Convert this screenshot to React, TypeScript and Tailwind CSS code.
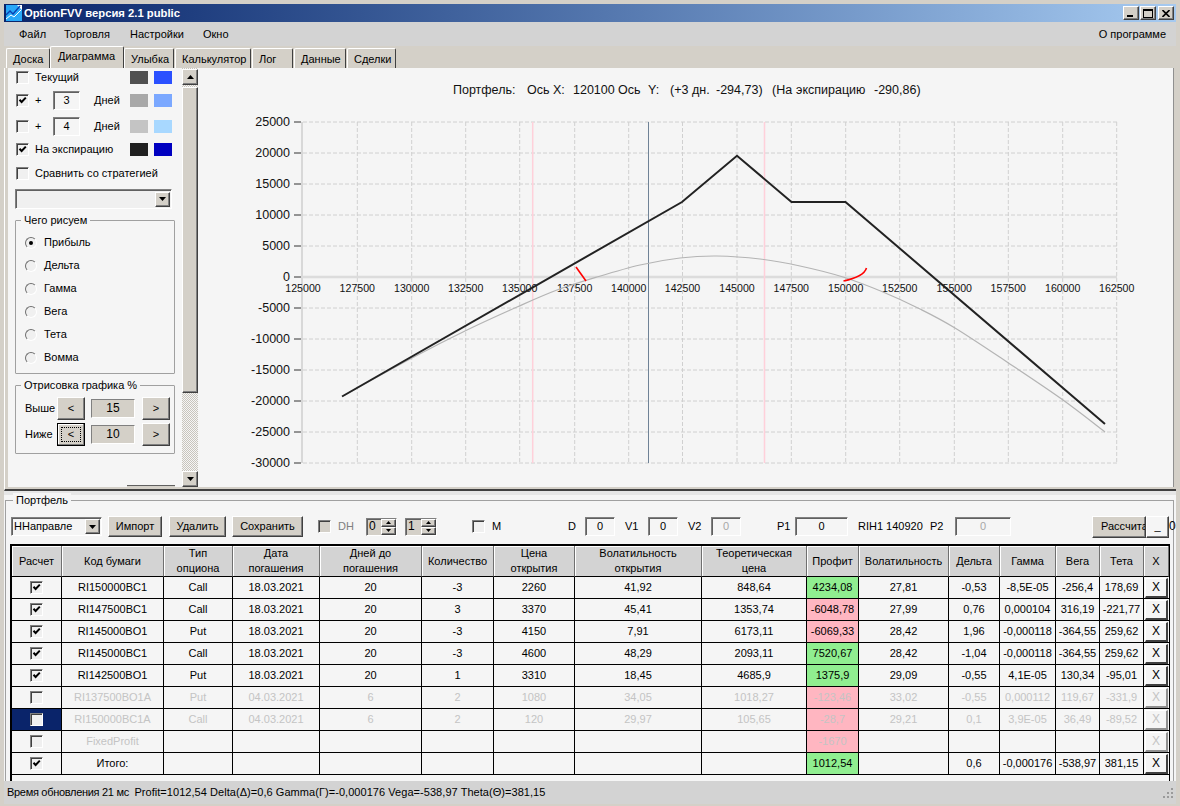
import type { ReactNode } from 'react';

const raised = 'border border-t-white border-l-white border-r-[#404040] border-b-[#404040] shadow-[inset_-1px_-1px_0_#808080]';
const sunken = 'border border-t-[#808080] border-l-[#808080] border-r-white border-b-white';

type Row = {
    on: boolean;
    off?: boolean;
    selected?: boolean;
    code: string;
    cells: string[];
    profit: string;
    good?: boolean;
    rest: string[];
};

const rows: Row[] = [
    { on: true, code: 'RI150000BC1', cells: ['Call', '18.03.2021', '20', '-3', '2260', '41,92', '848,64'], profit: '4234,08', good: true, rest: ['27,81', '-0,53', '-8,5E-05', '-256,4', '178,69'] },
    { on: true, code: 'RI147500BC1', cells: ['Call', '18.03.2021', '20', '3', '3370', '45,41', '1353,74'], profit: '-6048,78', rest: ['27,99', '0,76', '0,000104', '316,19', '-221,77'] },
    { on: true, code: 'RI145000BO1', cells: ['Put', '18.03.2021', '20', '-3', '4150', '7,91', '6173,11'], profit: '-6069,33', rest: ['28,42', '1,96', '-0,000118', '-364,55', '259,62'] },
    { on: true, code: 'RI145000BC1', cells: ['Call', '18.03.2021', '20', '-3', '4600', '48,29', '2093,11'], profit: '7520,67', good: true, rest: ['28,42', '-1,04', '-0,000118', '-364,55', '259,62'] },
    { on: true, code: 'RI142500BO1', cells: ['Put', '18.03.2021', '20', '1', '3310', '18,45', '4685,9'], profit: '1375,9', good: true, rest: ['29,09', '-0,55', '4,1E-05', '130,34', '-95,01'] },
    { on: false, off: true, code: 'RI137500BO1A', cells: ['Put', '04.03.2021', '6', '2', '1080', '34,05', '1018,27'], profit: '-123,46', rest: ['33,02', '-0,55', '0,000112', '119,67', '-331,9'] },
    { on: false, off: true, selected: true, code: 'RI150000BC1A', cells: ['Call', '04.03.2021', '6', '2', '120', '29,97', '105,65'], profit: '-28,7', rest: ['29,21', '0,1', '3,9E-05', '36,49', '-89,52'] },
    { on: false, off: true, code: 'FixedProfit', cells: ['', '', '', '', '', '', ''], profit: '-1670', rest: ['', '', '', '', ''] },
    { on: true, code: 'Итого:', cells: ['', '', '', '', '', '', ''], profit: '1012,54', good: true, rest: ['', '0,6', '-0,000176', '-538,97', '381,15'] },
];

const columns = [50, 102, 69, 87, 102, 72, 81, 127, 105, 52, 90, 51, 56, 44, 44, 25];

const headers = [
    ['Расчет'], ['Код бумаги'], ['Тип', 'опциона'], ['Дата', 'погашения'], ['Дней до', 'погашения'], ['Количество'],
    ['Цена', 'открытия'], ['Волатильность', 'открытия'], ['Теоретическая', 'цена'], ['Профит'], ['Волатильность'],
    ['Дельта'], ['Гамма'], ['Вега'], ['Тета'], ['X'],
];

const xTicks = [303, 357.3, 411.7, 465.7, 519.7, 574.7, 628.7, 682.5, 737, 791.3, 845.7, 899.7, 954.3, 1008.3, 1062.7, 1116.7];
const xLabels = ['125000', '127500', '130000', '132500', '135000', '137500', '140000', '142500', '145000', '147500', '150000', '152500', '155000', '157500', '160000', '162500'];
const yValues = ['25000', '20000', '15000', '10000', '5000', '0', '-5000', '-10000', '-15000', '-20000', '-25000', '-30000'];

const chartTitle = [
    { text: 'Портфель:', w: 'w-[74px]' },
    { text: 'Ось X:', w: 'w-[46px]' },
    { text: '120100', w: 'w-[45px]' },
    { text: 'Ось', w: 'w-[30px]' },
    { text: 'Y:', w: 'w-[22px]' },
    { text: '(+3', w: 'w-[22px]' },
    { text: 'дн.', w: 'w-[24px]' },
    { text: '-294,73)', w: 'w-[56px]' },
    { text: '(На', w: 'w-[24px]' },
    { text: 'экспирацию', w: 'w-[78px]' },
    { text: '-290,86)', w: 'w-[50px]' },
];

const grayPoints: [number, number][] = [
    [343, 396], [412, 358], [467, 330], [517, 307], [557, 290], [597, 277], [640, 265], [680, 258], [717, 256],
    [760, 259], [800, 266], [843, 277], [883, 292], [920, 309], [955, 328], [1007, 362], [1063, 400], [1105, 432],
];

// catmull-rom through the measured points, the curve is too bent for a polyline
function smoothPath(pts: [number, number][]) {
    let d = `M${pts[0][0]} ${pts[0][1]}`;
    for (let i = 0; i < pts.length - 1; i++) {
        const p0 = pts[Math.max(i - 1, 0)];
        const p1 = pts[i];
        const p2 = pts[i + 1];
        const p3 = pts[Math.min(i + 2, pts.length - 1)];
        const c1x = p1[0] + (p2[0] - p0[0]) / 6;
        const c1y = p1[1] + (p2[1] - p0[1]) / 6;
        const c2x = p2[0] - (p3[0] - p1[0]) / 6;
        const c2y = p2[1] - (p3[1] - p1[1]) / 6;
        d += ` C${c1x} ${c1y} ${c2x} ${c2y} ${p2[0]} ${p2[1]}`;
    }
    return d;
}

function CheckBox({ checked, disabled }: { checked?: boolean; disabled?: boolean }) {
    return (
        <span className={`${sunken} shadow-[inset_1px_1px_0_#404040] w-[13px] h-[13px] shrink-0 flex items-center justify-center ${disabled ? 'bg-[#d4d0c8]' : 'bg-[#f0f0f0]'}`}>
            {checked && (
                <svg width="9" height="9" viewBox="0 0 9 9">
                    <path d="M1.5 3.8 L3.6 6 L7.8 1.6" stroke="#000" strokeWidth="2" fill="none" />
                </svg>
            )}
        </span>
    );
}

function Radio({ label, checked }: { label: string; checked?: boolean }) {
    return (
        <div className="flex items-center h-[23px]">
            <span className="w-[12px] h-[12px] rounded-full bg-[#f0f0f0] border border-t-[#707070] border-l-[#707070] border-r-white border-b-white shrink-0 flex items-center justify-center">
                {checked && <span className="w-[4px] h-[4px] rounded-full bg-black" />}
            </span>
            <span className="ml-[7px]">{label}</span>
        </div>
    );
}

function Arrow({ up }: { up?: boolean }) {
    return (
        <svg width="7" height="4" viewBox="0 0 7 4">
            <path d={up ? 'M3.5 0 L7 4 L0 4 Z' : 'M0 0 L7 0 L3.5 4 Z'} fill="#000" />
        </svg>
    );
}

function ComboButton() {
    return (
        <span className={`${raised} bg-[#d4d0c8] w-[15px] h-[15px] shrink-0 flex items-center justify-center`}>
            <Arrow />
        </span>
    );
}

function Group({ title, className, children }: { title: string; className: string; children: ReactNode }) {
    return (
        <div className={`relative border border-[#a0a0a0] rounded-[1px] ${className}`}>
            <span className="absolute -top-[8px] left-[5px] px-[3px] bg-[#f5f5f5] leading-[14px] whitespace-nowrap">{title}</span>
            {children}
        </div>
    );
}

function Stepper({ label, value, focused }: { label: string; value: string; focused?: boolean }) {
    return (
        <div className="flex items-center h-[23px]">
            <span className="w-[32px] shrink-0">{label}</span>
            {focused ? (
                <button className="w-[28px] h-[23px] bg-[#d4d0c8] border border-black shadow-[inset_-1px_-1px_0_#808080,inset_1px_1px_0_white] flex items-center justify-center">
                    <span className="border border-dotted border-black w-[20px] h-[15px] leading-[12px] text-center">&lt;</span>
                </button>
            ) : (
                <button className={`${raised} w-[28px] h-[23px] bg-[#d4d0c8] text-center`}>&lt;</button>
            )}
            <span className={`${sunken} ml-[6px] w-[44px] h-[19px] bg-[#d4d0c8] text-[12px] flex items-center justify-center`}>{value}</span>
            <button className={`${raised} ml-[7px] w-[28px] h-[23px] bg-[#d4d0c8] text-center`}>&gt;</button>
        </div>
    );
}

function Field({ value, w, disabled }: { value: string; w: string; disabled?: boolean }) {
    return (
        <span className={`${sunken} shadow-[inset_1px_1px_0_#606060] ${w} h-[19px] shrink-0 bg-[#f5f5f5] flex items-center justify-center ${disabled ? 'text-[#a8a8a8]' : ''}`}>{value}</span>
    );
}

function Spin({ value, w, ml }: { value: string; w: string; ml?: string }) {
    return (
        <span className={`${sunken} shadow-[inset_1px_1px_0_#606060] ${w} ${ml ?? ''} h-[18px] bg-[#d4d0c8] shrink-0 flex items-center justify-between pl-[2px] text-[12px]`}>
            {value}
            <span className="flex flex-col w-[15px] h-[16px]">
                <span className={`${raised} bg-[#d4d0c8] h-[8px] flex items-center justify-center`}><svg width="5" height="3" viewBox="0 0 5 3"><path d="M2.5 0 L5 3 L0 3 Z" fill="#000" /></svg></span>
                <span className={`${raised} bg-[#d4d0c8] h-[8px] flex items-center justify-center`}><svg width="5" height="3" viewBox="0 0 5 3"><path d="M0 0 L5 0 L2.5 3 Z" fill="#000" /></svg></span>
            </span>
        </span>
    );
}

function ToolButton({ label, className }: { label: string; className: string }) {
    return (
        <button className={`${raised} bg-[#d4d0c8] h-[21px] shrink-0 text-center whitespace-nowrap ${className}`}>{label}</button>
    );
}

function Swatches({ a, b }: { a: string; b: string }) {
    return (
        <div className="ml-auto mr-[10px] flex gap-[6px]">
            <span className={`w-[18px] h-[13px] ${a}`} />
            <span className={`w-[18px] h-[13px] ${b}`} />
        </div>
    );
}

function LeftPane() {
    return (
        <div className="w-[174px] shrink-0 pl-[8px] bg-[#f5f5f5] overflow-hidden">
            <div className="flex items-center h-[19px]">
                <CheckBox />
                <span className="ml-[6px]">Текущий</span>
                <Swatches a="bg-[#505050]" b="bg-[#2a50ff]" />
            </div>
            <div className="flex items-center h-[26px]">
                <CheckBox checked />
                <span className="ml-[6px] w-[18px]">+</span>
                <Field value="3" w="w-[27px]" />
                <span className="ml-[14px]">Дней</span>
                <Swatches a="bg-[#a8a8a8]" b="bg-[#7ba8ff]" />
            </div>
            <div className="flex items-center h-[26px]">
                <CheckBox />
                <span className="ml-[6px] w-[18px]">+</span>
                <Field value="4" w="w-[27px]" />
                <span className="ml-[14px]">Дней</span>
                <Swatches a="bg-[#c4c4c4]" b="bg-[#a8d8ff]" />
            </div>
            <div className="flex items-center h-[21px]">
                <CheckBox checked />
                <span className="ml-[6px]">На экспирацию</span>
                <Swatches a="bg-[#202020]" b="bg-[#0000c0]" />
            </div>
            <div className="flex items-center h-[26px]">
                <CheckBox />
                <span className="ml-[6px]">Сравнить со стратегией</span>
            </div>
            <div className={`${sunken} shadow-[inset_1px_1px_0_#606060] mt-[3px] -ml-[1px] w-[157px] h-[20px] bg-[#f0f0f0] flex items-center justify-end pr-[1px]`}>
                <ComboButton />
            </div>
            <Group title="Чего рисуем" className="mt-[11px] -ml-[1px] w-[160px] h-[154px] pt-[10px] pl-[9px]">
                <Radio label="Прибыль" checked />
                <Radio label="Дельта" />
                <Radio label="Гамма" />
                <Radio label="Вега" />
                <Radio label="Тета" />
                <Radio label="Вомма" />
            </Group>
            <Group title="Отрисовка графика %" className="mt-[11px] -ml-[1px] w-[160px] h-[69px] pt-[11px] pl-[9px] flex flex-col gap-[3px]">
                <Stepper label="Выше" value="15" />
                <Stepper label="Ниже" value="10" focused />
            </Group>
            <div className="mt-[31px] ml-[111px] w-[48px] h-[10px] bg-[#d4d0c8] border-t border-t-[#606060]" />
        </div>
    );
}

function ScrollBar() {
    return (
        <div className="w-[16px] shrink-0 flex flex-col bg-[repeating-conic-gradient(#f5f5f5_0_25%,#c8c4bc_0_50%)] bg-[length:2px_2px]">
            <span className={`${raised} bg-[#d4d0c8] h-[16px] mt-[1px] flex items-center justify-center`}><Arrow up /></span>
            <span className={`${raised} bg-[#d4d0c8] h-[306px] mt-[2px]`} />
            <span className={`${raised} bg-[#d4d0c8] h-[16px] mt-[78px] flex items-center justify-center`}><Arrow /></span>
        </div>
    );
}

function Chart() {
    const black = '342,396.5 682,202 737,155.7 791.5,202 845.5,202 1105,424';
    const yTick = (i: number) => 122 + i * 31;
    return (
        <div className="flex-1 min-w-0 bg-[#f5f5f5] border-r border-r-[#909090] overflow-hidden">
            <div className="h-[40px] pt-[14px] pl-[255px] flex text-[12.5px] leading-[16px] text-[#111] whitespace-nowrap">
                {chartTitle.map(t => <span key={t.text} className={`${t.w} shrink-0`}>{t.text}</span>)}
            </div>
            <svg width="976" height="379" viewBox="198 108 976 379" className="block">
                {yValues.map((_, i) => (
                    <line key={i} x1="303" x2="1117" y1={yTick(i)} y2={yTick(i)} stroke="#d0d0d0" strokeDasharray="4 2" />
                ))}
                {xTicks.slice(1).map(x => (
                    <line key={x} x1={x} x2={x} y1="122" y2="463" stroke="#d0d0d0" strokeDasharray="4 2" />
                ))}
                <line x1="302" x2="302" y1="122" y2="463" stroke="#d8d8d8" strokeWidth="2" />
                <line x1="302" x2="1117" y1="277" y2="277" stroke="#dcdcdc" strokeWidth="2.5" />
                <line x1="532.7" x2="532.7" y1="122" y2="463" stroke="#ffd0da" strokeWidth="1.5" />
                <line x1="764.5" x2="764.5" y1="122" y2="463" stroke="#ffd0da" strokeWidth="1.5" />
                <line x1="648.5" x2="648.5" y1="122" y2="463" stroke="#6f8296" />
                {yValues.map((v, i) => (
                    <g key={v}>
                        <line x1="294" x2="301" y1={yTick(i)} y2={yTick(i)} stroke="#333" />
                        <text x="290" y={yTick(i) + 4} textAnchor="end" fontSize="12.5" fill="#111" fontFamily="'Liberation Sans', sans-serif">{v}</text>
                    </g>
                ))}
                {xLabels.map((v, i) => (
                    <text key={v} x={xTicks[i]} y="292" textAnchor="middle" fontSize="10.6" fill="#111" fontFamily="'Liberation Sans', sans-serif">{v}</text>
                ))}
                <path d={smoothPath(grayPoints)} fill="none" stroke="#b4b4b4" strokeWidth="1.2" />
                <polyline points={black} fill="none" stroke="#222" strokeWidth="2" />
                <path d="M576 267 L586 281" stroke="#ff0000" strokeWidth="1.6" fill="none" />
                <path d="M843.5 281 C853 279 864 276 866.5 268" stroke="#ff0000" strokeWidth="1.6" fill="none" />
            </svg>
        </div>
    );
}

function PortfolioTable() {
    return (
        <div className="w-[1160px] h-[237px] border-l-2 border-t-2 border-r border-black bg-[#f5f5f5]">
            <table className="table-fixed border-separate border-spacing-0 w-[1157px]">
                <colgroup>
                    {columns.map((w, i) => <col key={i} width={w} />)}
                </colgroup>
                <thead>
                    <tr>
                        {headers.map((h, i) => (
                            <th key={i} className="h-[30px] p-0 font-normal bg-[#d3d3d3] border-b border-b-black border-r border-r-[#707070] shadow-[inset_1px_1px_0_white] leading-[15px] text-center">
                                {h.map(line => <div key={line}>{line}</div>)}
                            </th>
                        ))}
                    </tr>
                </thead>
                <tbody>
                    {rows.map(row => {
                        const text = row.off ? 'text-[#c4c4c4]' : 'text-black';
                        const cell = 'h-[22px] p-0 pb-[1px] border-b border-r border-black text-center whitespace-nowrap overflow-hidden';
                        return (
                            <tr key={row.code} className={text}>
                                <td className={`${cell} ${row.selected ? 'bg-[#0a246a]' : ''}`}>
                                    <div className="flex justify-center"><CheckBox checked={row.on} /></div>
                                </td>
                                <td className={cell}>{row.code}</td>
                                {row.cells.map((c, i) => <td key={i} className={cell}>{c}</td>)}
                                <td className={`${cell} ${row.good ? 'bg-[#90ee90]' : 'bg-[#ffb6c1]'}`}>{row.profit}</td>
                                {row.rest.map((c, i) => <td key={i} className={cell}>{c}</td>)}
                                <td className="h-[22px] p-0 border-b border-black text-center">
                                    <div className={`mx-auto w-[23px] h-[20px] bg-[#f5f5f5] border border-t-white border-l-white border-r-2 border-b-2 text-[12px] leading-[17px] ${row.off ? 'border-r-[#909090] border-b-[#909090]' : 'border-r-[#404040] border-b-[#404040]'}`}>X</div>
                                </td>
                            </tr>
                        );
                    })}
                </tbody>
            </table>
        </div>
    );
}

function Toolbar() {
    return (
        <div className="h-[43px] pt-[8px] pl-[1px] flex items-center whitespace-nowrap">
            <div className={`${sunken} shadow-[inset_1px_1px_0_#606060] w-[91px] h-[19px] bg-[#f5f5f5] shrink-0 flex items-center justify-between pl-[2px] pr-[1px]`}>
                ННаправле
                <ComboButton />
            </div>
            <ToolButton label="Импорт" className="ml-[6px] w-[54px]" />
            <ToolButton label="Удалить" className="ml-[7px] w-[57px]" />
            <ToolButton label="Сохранить" className="ml-[6px] w-[71px]" />
            <span className="ml-[15px]"><CheckBox disabled /></span>
            <span className="ml-[7px] w-[28px] shrink-0 text-[#808080]">DH</span>
            <Spin value="0" w="w-[31px]" />
            <Spin value="1" w="w-[32px]" ml="ml-[8px]" />
            <span className="ml-[35px]"><CheckBox /></span>
            <span className="ml-[7px] w-[76px] shrink-0">M</span>
            <span className="w-[17px] shrink-0">D</span>
            <Field value="0" w="w-[30px]" />
            <span className="ml-[10px] w-[23px] shrink-0">V1</span>
            <Field value="0" w="w-[30px]" />
            <span className="ml-[10px] w-[23px] shrink-0">V2</span>
            <Field value="0" w="w-[30px]" disabled />
            <span className="ml-[36px] w-[18px] shrink-0">P1</span>
            <Field value="0" w="w-[53px]" />
            <span className="ml-[10px] w-[72px] shrink-0">RIH1 140920</span>
            <span className="w-[25px] shrink-0">P2</span>
            <Field value="0" w="w-[56px]" disabled />
            <button className={`${raised} ml-[81px] w-[54px] h-[22px] bg-[#d4d0c8] shrink-0 overflow-hidden text-left pl-[8px]`}>Рассчитать</button>
            <button className={`${raised} w-[23px] h-[22px] bg-[#f5f5f5] shrink-0 text-center`}>_</button>
            <span className="shrink-0 text-[12px]">0</span>
        </div>
    );
}

const tabs = [
    { label: 'Доска', w: 'w-[44px]' },
    { label: 'Диаграмма', w: 'w-[74px]', active: true },
    { label: 'Улыбка', w: 'w-[50px]' },
    { label: 'Калькулятор', w: 'w-[76px]' },
    { label: 'Лог', w: 'w-[41px]' },
    { label: 'Данные', w: 'w-[52px]' },
    { label: 'Сделки', w: 'w-[49px]' },
];

export default function App() {
    return (
        <div className="w-[1180px] h-[806px] overflow-hidden flex flex-col p-[4px] pb-[2px] bg-[#d4d0c8] text-[11px] leading-[13px] text-black [font-family:'Liberation_Sans',sans-serif]">
            {/* Title bar */}
            <div className="h-[18px] shrink-0 flex items-center pl-[2px] pr-[2px] bg-linear-to-r from-[#0a246a] to-[#a6caf0]">
                <svg width="16" height="16" viewBox="0 0 16 16" className="shrink-0">
                    <rect width="16" height="16" fill="#28a8f8" />
                    <path d="M11 0h5v5z" fill="#ffffff" />
                    <path d="M0 10 L4 6 L7 9 L14 1" stroke="#0b3fb0" strokeWidth="1.3" fill="none" />
                    <path d="M0 14 L5 10 L8 12 L15 5" stroke="#ffffff" strokeWidth="1" fill="none" />
                </svg>
                <span className="ml-[2px] text-white font-bold text-[11.25px] whitespace-nowrap">OptionFVV версия 2.1 public</span>
                <div className="ml-auto flex gap-[1px]">
                    <button className={`${raised} w-[16px] h-[14px] bg-[#d4d0c8] flex items-end pl-[3px] pb-[2px]`}><span className="w-[6px] h-[2px] bg-black" /></button>
                    <button className={`${raised} w-[16px] h-[14px] bg-[#d4d0c8] flex items-center justify-center`}><span className="w-[10px] h-[9px] border border-black border-t-2" /></button>
                    <button className={`${raised} ml-[1px] w-[16px] h-[14px] bg-[#d4d0c8] flex items-center justify-center`}>
                        <svg width="8" height="7" viewBox="0 0 8 7"><path d="M0.5 0 L7.5 7 M7.5 0 L0.5 7" stroke="#000" strokeWidth="1.6" /></svg>
                    </button>
                </div>
            </div>

            {/* Menu */}
            <div className="h-[24px] shrink-0 flex items-center bg-[#d3d3d3] pl-[15px] pr-[10px]">
                <span className="w-[45px]">Файл</span>
                <span className="w-[66px]">Торговля</span>
                <span className="w-[73px]">Настройки</span>
                <span>Окно</span>
                <span className="ml-auto">О программе</span>
            </div>

            {/* Tabs */}
            <div className="h-[22px] shrink-0 flex items-end pl-[2px] gap-[1px]">
                {tabs.map(t => (
                    <div
                        key={t.label}
                        className={`${t.w} shrink-0 rounded-t-[2px] border-t border-l border-t-white border-l-white border-r border-r-[#404040] bg-[#d4d0c8] ${t.active ? 'h-[22px] pt-[3px] pl-[7px] -ml-[1px] -mr-[1px] z-10' : 'h-[20px] pt-[4px] pl-[6px]'}`}
                    >
                        {t.label}
                    </div>
                ))}
            </div>

            {/* Chart page */}
            <div className="h-[423px] shrink-0 flex border-l border-l-white pl-[3px] pb-[2px] border-b-2 border-b-[#404040] pr-[2px]">
                <LeftPane />
                <ScrollBar />
                <Chart />
            </div>

            {/* Portfolio */}
            <div className="h-[290px] shrink-0 bg-[#f5f5f5] border-t-4 border-t-[#e6e6e6] pl-[1px] pr-[2px] pt-[5px]">
                <div className="relative h-[281px] border-t border-l border-r border-[#a0a0a0] pl-[4px]">
                    <span className="absolute -top-[8px] left-[7px] px-[3px] bg-[#f5f5f5] leading-[14px]">Портфель</span>
                    <Toolbar />
                    <PortfolioTable />
                </div>
            </div>

            {/* Status bar */}
            <div className="h-[23px] shrink-0 flex items-center justify-between bg-[#d3d3d3] pl-[3px] pr-[2px]">
                <span className="whitespace-pre">
                    <span className="tracking-[-0.3px]">Время обновления 21 мс  </span>
                    <span className="tracking-[0.05px]">Profit=1012,54 Delta(Δ)=0,6 Gamma(Γ)=-0,000176 Vega=-538,97 Theta(Θ)=381,15</span>
                </span>
                <svg width="12" height="12" viewBox="0 0 12 12">
                    <path d="M9 1h2v2H9zM5 5h2v2H5zM9 5h2v2H9zM1 9h2v2H1zM5 9h2v2H5zM9 9h2v2H9z" fill="#9a9a9a" />
                </svg>
            </div>
        </div>
    );
}
